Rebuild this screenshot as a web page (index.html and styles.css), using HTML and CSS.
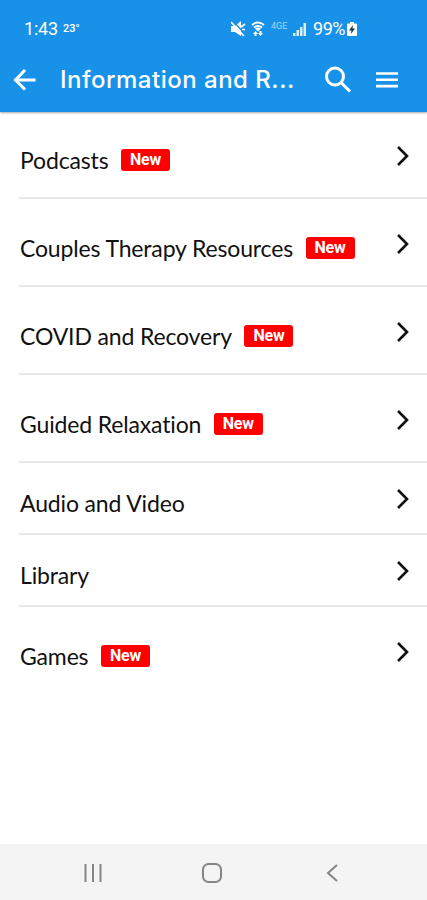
FILE: index.html
```html
<!DOCTYPE html>
<html lang="en">
<head>
  <meta charset="UTF-8" />
  <meta name="viewport" content="width=device-width, initial-scale=1" />
  <title>Information and Resources</title>
  <link rel="stylesheet" href="styles.css">
</head>
<body>

  <header class="header">
    <div class="status-bar">
      <span class="time">1:43</span>
      <span class="temp">23°</span>
      <svg class="status-icons" width="78" height="18" viewBox="0 0 78 18" fill="#fff">
        <!-- muted -->
        <path d="M0 6h4l6-5v15l-6-4H0z" />
        <path d="M2 1l12 13" stroke="#1892e8" stroke-width="1.5" />
        <path d="M0 2l13 14M10 7l4-3M11 9.500h3" stroke="#fff" stroke-width="1.6" fill="none" />
        <!-- wifi -->
        <path d="M21 5q6-5 12 0M23 7.500q4-3 8 0" stroke="#fff" stroke-width="1.800" fill="none" />
        <path d="M24 8.500q3-2 6 0l-3 3zM22 14l2.500-3 2.500 3h-1.500v2h-2v-2zM27 13h1.500v-2h2v2H32l-2.500 3z" />
        <!-- signal -->
        <path d="M62 13h2.500v3H62zM65.500 10H68v6h-2.500zM69 7h2.500v9H69zM72.500 3H75v13h-2.500z" opacity=".85" />
        <text class="network" x="40" y="9">4GE</text>
      </svg>
      <span class="percent">99%</span>
      <svg class="battery" width="10" height="16" viewBox="0 0 10 16">
        <path d="M3 1h4v1.500h2q1 0 1 1V14q0 1-1 1H1q-1 0-1-1V3.500q0-1 1-1h2z" fill="#fff" />
        <path d="M6 4L2 9.500h2.500L4 13l4-5.500H5.500z" fill="#17374f" />
      </svg>
    </div>
    <div class="toolbar">
      <svg class="back" width="24" height="24" viewBox="0 0 24 24">
        <path d="M22.500 12H3M12 2L2.500 12l9.500 9.500" />
      </svg>
      <h1 class="title">Information and R...</h1>
      <svg class="search" width="28" height="28" viewBox="0 0 28 28">
        <circle cx="11" cy="10.500" r="8.500" />
        <path d="M17 16.500l9 9" />
      </svg>
      <svg class="menu" width="22" height="16" viewBox="0 0 22 16">
        <path d="M0 1.500h22M0 7.800h22M0 14.100h22" />
      </svg>
    </div>
  </header>

  <main class="list">
    <a class="row tall">
      <span class="label">Podcasts</span><span class="badge">New</span>
      <svg class="chevron" width="14" height="22" viewBox="0 0 14 22"><path d="M2 2l9 9-9 9" /></svg>
    </a>
    <a class="row tall">
      <span class="label">Couples Therapy Resources</span><span class="badge">New</span>
      <svg class="chevron" width="14" height="22" viewBox="0 0 14 22"><path d="M2 2l9 9-9 9" /></svg>
    </a>
    <a class="row tall">
      <span class="label">COVID and Recovery</span><span class="badge">New</span>
      <svg class="chevron" width="14" height="22" viewBox="0 0 14 22"><path d="M2 2l9 9-9 9" /></svg>
    </a>
    <a class="row tall">
      <span class="label">Guided Relaxation</span><span class="badge">New</span>
      <svg class="chevron" width="14" height="22" viewBox="0 0 14 22"><path d="M2 2l9 9-9 9" /></svg>
    </a>
    <a class="row">
      <span class="label">Audio and Video</span>
      <svg class="chevron" width="14" height="22" viewBox="0 0 14 22"><path d="M2 2l9 9-9 9" /></svg>
    </a>
    <a class="row">
      <span class="label">Library</span>
      <svg class="chevron" width="14" height="22" viewBox="0 0 14 22"><path d="M2 2l9 9-9 9" /></svg>
    </a>
    <a class="row tall">
      <span class="label">Games</span><span class="badge">New</span>
      <svg class="chevron" width="14" height="22" viewBox="0 0 14 22"><path d="M2 2l9 9-9 9" /></svg>
    </a>
  </main>

  <nav class="nav-bar">
    <svg width="18" height="18" viewBox="0 0 18 18"><path d="M1.500 0v18M9 0v18M16.500 0v18" /></svg>
    <svg class="home" width="20" height="20" viewBox="0 0 20 20"><rect x="1" y="1" width="18" height="18" rx="5.500" /></svg>
    <svg width="12" height="18" viewBox="0 0 12 18"><path d="M11 1L2 9l9 8" /></svg>
  </nav>

</body>
</html>
```

FILE: styles.css
```css
* {
  box-sizing: border-box;
}
body {
  margin: 0;
  height: 900px;
  display: flex;
  flex-direction: column;
  background: #fff;
  color: #111;
  font-family: Lato, sans-serif;
  overflow: hidden;
}
svg {
  flex: none;
}
.header {
  height: 112px;
  flex: none;
  background: #1892e8;
  color: #fff;
  box-shadow: 0 1px 2px rgba(0, 0, 0, 0.35);
}
.status-bar {
  height: 48px;
  padding: 9px 70px 0 24px;
  display: flex;
  align-items: center;
  font-family: Roboto, sans-serif;
}
.time {
  font-size: 18px;
  letter-spacing: -0.2px;
  width: 39px;
}
.temp {
  font-size: 11px;
  font-weight: 500;
}
.status-icons {
  margin-left: auto;
  margin-right: 4px;
}
.network {
  font-size: 9px;
  opacity: 0.6;
}
.percent {
  font-size: 18px;
  letter-spacing: -0.5px;
  margin-right: 2px;
}
.toolbar {
  height: 64px;
  padding: 0 29px 0 13px;
  display: flex;
  align-items: center;
}
.toolbar svg {
  fill: none;
  stroke: #fff;
  stroke-width: 3;
}
.title {
  margin: 0 auto 0 23px;
  font-family: Inter, sans-serif;
  font-size: 24px;
  font-weight: 500;
  letter-spacing: 0.5px;
  line-height: 30px;
  white-space: nowrap;
}
.search {
  margin-right: 24px;
}
.toolbar .menu {
  stroke-width: 2.6;
}
.list {
  flex: 1;
  margin-top: -1px;
}
.row {
  height: 72px;
  margin-left: 19px;
  padding: 10px 17px 0 1px;
  display: flex;
  align-items: center;
  border-bottom: 2px solid #e8e8e8;
}
.row.tall {
  height: 88px;
  padding-top: 12px;
}
.row:last-child {
  border-bottom-color: transparent;
}
.label {
  font-size: 23px;
  letter-spacing: -0.15px;
  font-variant-ligatures: none;
  white-space: nowrap;
}
.badge {
  width: 49px;
  height: 22px;
  margin-left: 12.5px;
  border-radius: 3px;
  background: #fe0000;
  color: #fff;
  font-family: Roboto, sans-serif;
  font-size: 16px;
  font-weight: 700;
  letter-spacing: -0.2px;
  line-height: 22px;
  text-align: center;
}
.chevron {
  margin-left: auto;
  margin-bottom: 9px;
  fill: none;
  stroke: #111;
  stroke-width: 2.6;
}
.nav-bar {
  height: 56px;
  flex: none;
  padding: 2px 89px 0 84px;
  display: flex;
  align-items: center;
  justify-content: space-between;
  background: #f4f4f4;
}
.nav-bar svg {
  fill: none;
  stroke: #858585;
  stroke-width: 2;
}
.nav-bar .home {
  margin-right: 4px;
}
```
